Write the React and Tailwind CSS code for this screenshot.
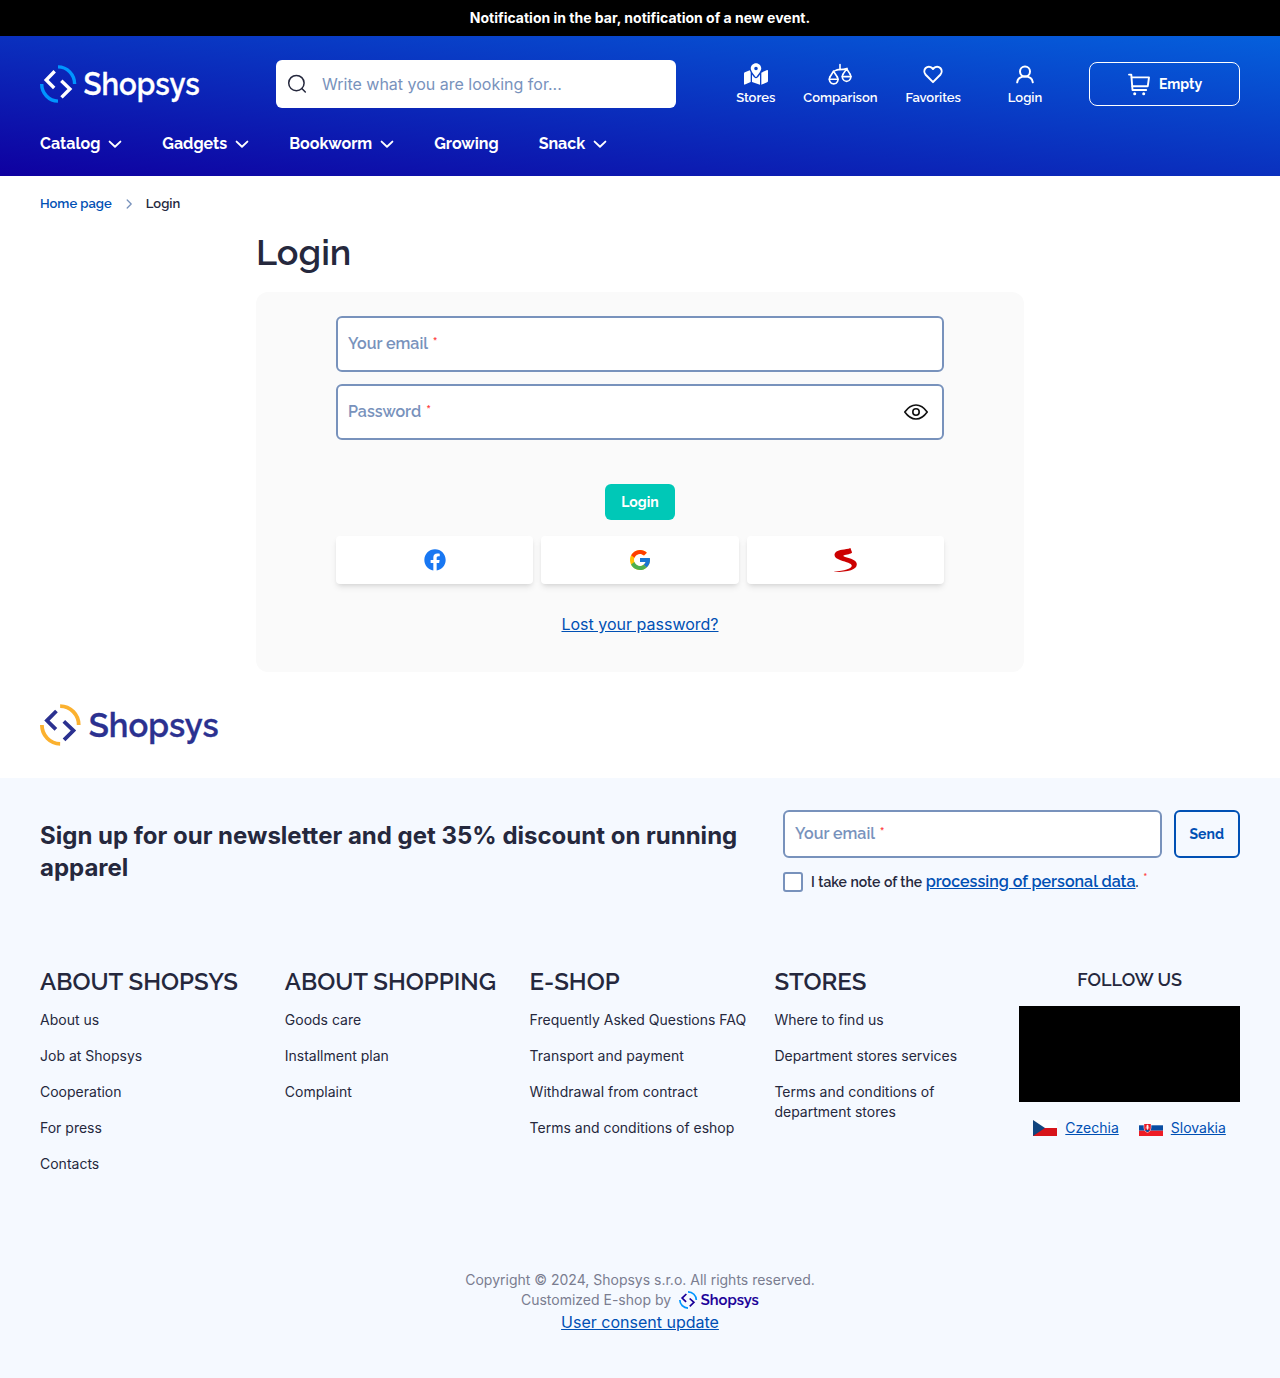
import React from "react";
import { FaFacebook, FaMapMarkedAlt } from "react-icons/fa";
import { FcGoogle } from "react-icons/fc";

const raleway = "font-['Raleway',sans-serif]";

function Logo({ className, arc, main }) {
  return (
    <svg viewBox="0 0 160 38" preserveAspectRatio="none" className={`overflow-visible ${className}`} fill="none" aria-label="Shopsys">
      <path d="M18 1.900A16.600 17.100 0 0 1 34.600 19" stroke={arc} strokeWidth="3.400" />
      <path d="M1.700 19A16.600 17.100 0 0 0 18 36.100" stroke={arc} strokeWidth="3.400" />
      <path d="M14.700 6.300 6.200 15l8 8M21.300 15.800l8.600 8.200-8.400 8.400" stroke={main} strokeWidth="3.400" />
      <text
        x="43.600"
        y="29.700"
        fill={main}
        stroke={main}
        strokeWidth="0.300"
        textLength="116"
        lengthAdjust="spacingAndGlyphs"
        fontFamily="Raleway, sans-serif"
        fontWeight="600"
        fontSize="31"
      >
        Shopsys
      </text>
    </svg>
  );
}

function Chevron() {
  return (
    <svg viewBox="0 0 14 14" className="size-3.5" fill="none" stroke="#fff" strokeWidth="1.9" strokeLinecap="round" strokeLinejoin="round">
      <path d="M1.6 4.6 7 9.8l5.4-5.2" />
    </svg>
  );
}

function ScalesIcon() {
  return (
    <svg viewBox="0 0 24 24" className="size-6" fill="none" stroke="#fff" strokeWidth="1.6" strokeLinecap="round" strokeLinejoin="round">
      <path d="M12 2.600v5M5.500 9.200c2.200-.2 2.600-1.500 5-1.600 3.200.1 5.200.1 8.500-1.200" />
      <path d="M5.500 9.300 1.900 15M5.500 9.300 9.300 15M1.300 17.200h8.800" />
      <path d="M1.900 15c-1.400 3 .2 6.900 3.800 6.900S10.900 18 9.300 15" />
      <path d="m18.600 6.800-3.700 5.600M18.600 6.800l3.600 5.600M14.300 14.600H23" />
      <path d="M14.900 12.400c-1.500 3 .1 7 3.700 7s5.100-4 3.600-7" />
    </svg>
  );
}

function HeartIcon() {
  return (
    <svg viewBox="0 0 24 24" className="size-6" fill="none" stroke="#fff" strokeWidth="2" strokeLinejoin="round">
      <path d="M12 20.100 4.700 12.700a4.900 4.900 0 0 1 0-6.700 4.500 4.500 0 0 1 6.400 0l.9 1 .9-1a4.500 4.500 0 0 1 6.400 0 4.900 4.900 0 0 1 0 6.700Z" />
    </svg>
  );
}

function UserIcon() {
  return (
    <svg viewBox="0 0 24 24" className="size-6" fill="none" stroke="#fff" strokeWidth="2" strokeLinecap="round">
      <circle cx="12" cy="9.600" r="5" />
      <path d="M4.200 20.300c.4-3.400 3.300-5.700 7.800-5.700s7.400 2.300 7.800 5.700" />
    </svg>
  );
}

function CartIcon() {
  return (
    <svg viewBox="0 0 24 24" className="size-6" fill="none" stroke="#fff" strokeWidth="1.900" strokeLinecap="round" strokeLinejoin="round">
      <path d="M2 2.600h2.300L5.500 18h13.700" />
      <path d="M4.700 5.400H22l-1.200 8.800H5.400" />
      <circle cx="7.700" cy="21.800" r="1.500" fill="#fff" stroke="none" />
      <circle cx="16.700" cy="21.800" r="1.500" fill="#fff" stroke="none" />
    </svg>
  );
}

function EyeIcon() {
  return (
    <svg viewBox="0 0 24 24" className="size-6" fill="none" stroke="#111" strokeWidth="1.600" strokeLinejoin="round">
      <path d="M.8 12C4.200 7.200 8 5 12 5s7.800 2.200 11.200 7c-3.400 4.800-7.200 7-11.200 7S4.200 16.800.8 12Z" />
      <circle cx="12" cy="12" r="3.200" />
    </svg>
  );
}

function SeznamIcon() {
  return (
    <svg viewBox="735 535 67 71" className="ml-px h-[24px] w-[23px]" fill="#c00">
      <path d="M783 535l5 13c-3 5-16 5-25 9-4 2 3 4 12 7 14 4 27 9 27 19 0 16-24 23-67 23v-1c31-3 50-9 52-17 1-8-16-11-33-17-12-4-18-8-18-15 0-9 9-14 22-16 9-1 18-2 25-5Z" />
    </svg>
  );
}

function HeaderItem({ icon, label, className = "" }) {
  return (
    <a className={`flex flex-col items-center ${className}`}>
      <span className="flex h-6 items-center">{icon}</span>
      <span className="mt-[3px] text-[13px] leading-[18px] font-semibold">{label}</span>
    </a>
  );
}

function Field({ label, className = "", children }) {
  return (
    <div className={`flex items-center justify-between rounded-md border-2 border-[#7892bc] bg-white pr-3.5 pl-2.5 ${className}`}>
      <label className={`${raleway} text-base font-semibold text-[#7892bc]`}>
        {label} <span className="ml-px font-medium text-[#f44]">*</span>
      </label>
      {children}
    </div>
  );
}

const nav = [
  ["Catalog", true],
  ["Gadgets", true],
  ["Bookworm", true],
  ["Growing", false],
  ["Snack", true],
];

const columns = [
  ["ABOUT SHOPSYS", ["About us", "Job at Shopsys", "Cooperation", "For press", "Contacts"]],
  ["ABOUT SHOPPING", ["Goods care", "Installment plan", "Complaint"]],
  ["E-SHOP", ["Frequently Asked Questions FAQ", "Transport and payment", "Withdrawal from contract", "Terms and conditions of eshop"]],
  ["STORES", ["Where to find us", "Department stores services", "Terms and conditions of department stores"]],
];

export default function App() {
  return (
    <div className="min-h-[1378px] w-full bg-white font-['Inter',sans-serif] text-[#25283d]">
      <div className="h-9 bg-black text-center text-sm leading-9 font-bold text-white">
        Notification in the bar, notification of a new event.
      </div>

      <header className={`${raleway} h-[140px] bg-[linear-gradient(to_top_right,#0f00a0,#0560dc)] px-10 pt-6 text-white`}>
        <div className="flex h-12 items-center">
          <Logo className="h-[38px] w-[160px]" arc="#0095ff" main="#fff" />
          <div className="ml-[76px] flex h-12 w-[400px] items-center rounded-md bg-white pl-2.5">
            <svg viewBox="0 0 24 24" className="size-6" fill="none" stroke="#25283d" strokeWidth="1.500" strokeLinecap="round">
              <circle cx="10.400" cy="11.100" r="7.700" />
              <path d="m15.800 16.500 3.500 3.500" />
            </svg>
            <span className="ml-3 font-['Inter',sans-serif] text-base text-[#7892bc]">Write what you are looking for...</span>
          </div>
          <div className="ml-auto flex items-start gap-7">
            <HeaderItem icon={<FaMapMarkedAlt className="h-[22px] w-6" />} label="Stores" />
            <HeaderItem icon={<ScalesIcon />} label="Comparison" />
            <HeaderItem icon={<HeartIcon />} label="Favorites" />
            <HeaderItem icon={<UserIcon />} label="Login" className="w-[72px]" />
            <a className="flex h-11 w-[151px] items-center justify-center gap-2 rounded-lg border border-white text-sm font-bold">
              <CartIcon />
              Empty
            </a>
          </div>
        </div>
        <nav className="mt-6 flex gap-10 text-base leading-6 font-bold">
          {nav.map(([label, more]) => (
            <a key={label} className="flex items-center gap-2">
              {label}
              {more && <Chevron />}
            </a>
          ))}
        </nav>
      </header>

      <div className={`${raleway} flex h-[54px] items-center px-10 pt-0.5 text-[13px] font-semibold`}>
        <a className="text-[#0050b4]">Home page</a>
        <svg viewBox="0 0 10 10" className="mx-3 size-2.5" fill="none" stroke="#7892bc" strokeWidth="1.300" strokeLinecap="round" strokeLinejoin="round">
          <path d="m3.200 1 4 4-4 4" />
        </svg>
        <span>Login</span>
      </div>

      <main className="mx-auto w-[768px]">
        <h1 className={`${raleway} text-4xl leading-[44px] font-semibold`}>Login</h1>
        <div className="mt-[18px] flex h-[380px] flex-col items-center rounded-xl bg-[#fafafa] px-20 pt-6">
          <Field label="Your email" className="h-14 w-full" />
          <Field label="Password" className="mt-3 h-14 w-full">
            <EyeIcon />
          </Field>
          <button className={`${raleway} mt-11 h-9 rounded-md bg-[#00c8b7] px-4 text-sm font-bold text-white`}>Login</button>
          <div className="mt-4 grid w-full grid-cols-3 gap-2">
            <a className="flex h-12 items-center justify-center rounded bg-white shadow-md">
              <FaFacebook className="size-[22px] text-[#1877f2]" />
            </a>
            <a className="flex h-12 items-center justify-center rounded bg-white shadow-md">
              <FcGoogle className="size-6" />
            </a>
            <a className="flex h-12 items-center justify-center rounded bg-white shadow-md">
              <SeznamIcon />
            </a>
          </div>
          <a className="mt-7 text-base text-[#0050b4] underline">Lost your password?</a>
        </div>
      </main>

      <div className="h-[106px] px-10 pt-8">
        <Logo className="h-[42px] w-[179px]" arc="#fbb12f" main="#2b3190" />
      </div>

      <footer className="h-[600px] bg-[#f5f9ff] px-10 pt-8">
        <div className="flex h-[152px] justify-between">
          <h2 className="w-[720px] pt-2.5 text-2xl leading-8 font-bold">
            Sign up for our newsletter and get 35% discount on running apparel
          </h2>
          <div className="w-[457px]">
            <div className="flex gap-3">
              <Field label="Your email" className="h-12 flex-1" />
              <button className={`${raleway} h-12 rounded-md border-2 border-[#0050b4] px-3.5 text-sm font-bold text-[#0050b4]`}>Send</button>
            </div>
            <div className={`${raleway} mt-3 flex h-6 items-center text-sm font-semibold`}>
              <span className="size-5 rounded-[3px] border-2 border-[#7892bc] bg-white" />
              <span className="ml-2 whitespace-pre">
                {"I take note of the "}
                <a className="text-base text-[#0050b4] underline">processing of personal data</a>.{" "}
                <sup className="top-[-0.2em] ml-px text-sm font-medium text-[#f44]">*</sup>
              </span>
            </div>
          </div>
        </div>

        <div className="grid h-[308px] grid-cols-5 gap-6">
          {columns.map(([title, links]) => (
            <div key={title}>
              <h3 className={`${raleway} pt-0.5 text-2xl leading-9 font-semibold whitespace-nowrap`}>{title}</h3>
              <ul className="mt-2.5 flex flex-col gap-4 text-sm">
                {links.map((l) => (
                  <li key={l}>{l}</li>
                ))}
              </ul>
            </div>
          ))}
          <div>
            <h3 className={`${raleway} pt-0.5 text-center text-lg leading-8 font-semibold`}>FOLLOW US</h3>
            <div className="mt-2.5 h-24 bg-black" />
            <div className="mt-4 flex items-center justify-center gap-5 text-sm text-[#0050b4]">
              <a className="flex items-center gap-2">
                <svg viewBox="0 0 24 16" className="h-4 w-6">
                  <path fill="#fff" d="M0 0h24v8H0z" />
                  <path fill="#d7141a" d="M0 8h24v8H0z" />
                  <path fill="#11457e" d="m0 0 12 8-12 8z" />
                </svg>
                <span className="underline">Czechia</span>
              </a>
              <a className="flex items-center gap-2">
                <svg viewBox="0 0 24 16" className="h-4 w-6">
                  <path fill="#fff" d="M0 0h24v5.300H0z" />
                  <path fill="#0b4ea2" d="M0 5.300h24v5.400H0z" />
                  <path fill="#ee1c25" d="M0 10.700h24V16H0z" />
                  <path fill="#fff" d="M4.700 3.600h7.600v4.200c0 2.400-1.600 4-3.800 5-2.200-1-3.800-2.600-3.800-5z" />
                  <path fill="#ee1c25" d="M5.200 4h6.600v4c0 2-1.400 3.500-3.300 4.300C6.600 11.500 5.200 10 5.200 8z" />
                  <path fill="none" stroke="#fff" strokeWidth=".9" d="M8.500 4.800v5M7.100 6.100h2.800M6.700 7.900h3.600" />
                  <path fill="#0b4ea2" d="M6.200 10.400c.8-.9 1.500-.9 2.300-.5.800-.4 1.500-.4 2.300.5-.6.800-1.400 1.400-2.300 1.900-.9-.5-1.700-1.100-2.300-1.900z" />
                </svg>
                <span className="underline">Slovakia</span>
              </a>
            </div>
          </div>
        </div>

        <div className="flex flex-col items-center text-sm text-[#7a7d90]">
          <p>Copyright © 2024, Shopsys s.r.o. All rights reserved.</p>
          <p className="flex items-center gap-2">
            Customized E-shop by
            <Logo className="h-[18px] w-[80px]" arc="#0095ff" main="#1a0098" />
          </p>
          <a className="mt-0.5 text-base leading-5 text-[#0050b4] underline">User consent update</a>
        </div>
      </footer>
    </div>
  );
}
